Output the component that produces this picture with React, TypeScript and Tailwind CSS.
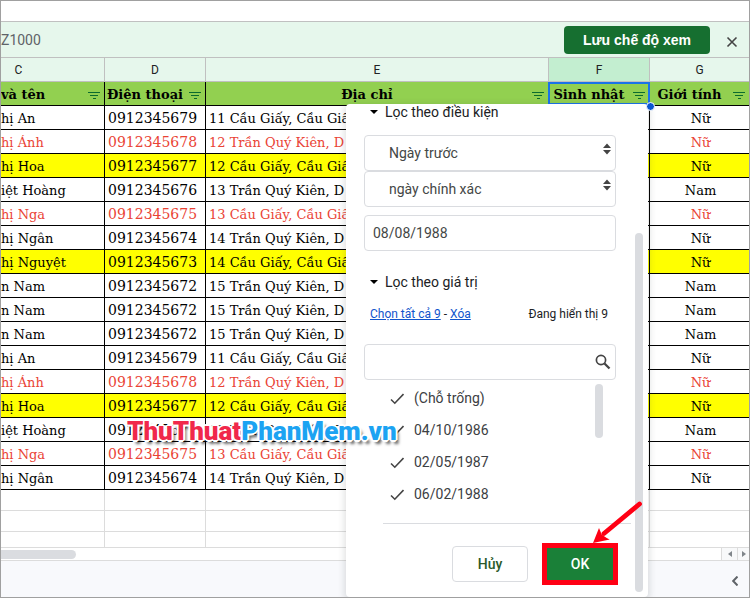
import { useState } from "react";
import clsx from "clsx";

type Tone = "plain" | "red" | "yellow";

const columns = ["C", "D", "E", "F", "G"];

const rows: { name: string; phone: string; address: string; gender: string; tone: Tone }[] = [
  { name: "hị An", phone: "0912345679", address: "11 Cầu Giấy, Cầu Giấ", gender: "Nữ", tone: "plain" },
  { name: "hị Ánh", phone: "0912345678", address: "12 Trần Quý Kiên, D", gender: "Nữ", tone: "red" },
  { name: "hị Hoa", phone: "0912345677", address: "12 Cầu Giấy, Cầu Giấ", gender: "Nữ", tone: "yellow" },
  { name: "iệt Hoàng", phone: "0912345676", address: "13 Trần Quý Kiên, D", gender: "Nam", tone: "plain" },
  { name: "hị Nga", phone: "0912345675", address: "13 Cầu Giấy, Cầu Giấ", gender: "Nữ", tone: "red" },
  { name: "hị Ngân", phone: "0912345674", address: "14 Trần Quý Kiên, D", gender: "Nữ", tone: "plain" },
  { name: "hị Nguyệt", phone: "0912345673", address: "14 Cầu Giấy, Cầu Giấ", gender: "Nữ", tone: "yellow" },
  { name: "n Nam", phone: "0912345672", address: "15 Trần Quý Kiên, D", gender: "Nam", tone: "plain" },
  { name: "n Nam", phone: "0912345672", address: "15 Trần Quý Kiên, D", gender: "Nam", tone: "plain" },
  { name: "n Nam", phone: "0912345672", address: "15 Trần Quý Kiên, D", gender: "Nam", tone: "plain" },
  { name: "hị An", phone: "0912345679", address: "11 Cầu Giấy, Cầu Giấ", gender: "Nữ", tone: "plain" },
  { name: "hị Ánh", phone: "0912345678", address: "12 Trần Quý Kiên, D", gender: "Nữ", tone: "red" },
  { name: "hị Hoa", phone: "0912345677", address: "12 Cầu Giấy, Cầu Giấ", gender: "Nữ", tone: "yellow" },
  { name: "iệt Hoàng", phone: "0912345676", address: "13 Trần Quý Kiên, D", gender: "Nam", tone: "plain" },
  { name: "hị Nga", phone: "0912345675", address: "13 Cầu Giấy, Cầu Giấ", gender: "Nữ", tone: "red" },
  { name: "hị Ngân", phone: "0912345674", address: "14 Trần Quý Kiên, D", gender: "Nữ", tone: "plain" },
];

const rowTone: Record<Tone, string> = {
  plain: "bg-white text-black",
  red: "bg-white text-[#ea4335]",
  yellow: "bg-[#ffff00] text-black",
};

const values = ["(Chỗ trống)", "04/10/1986", "02/05/1987", "06/02/1988"];

const headings = ["và tên", "Điện thoại", "Địa chỉ", "Sinh nhật", "Giới tính"];

function FilterIcon() {
  return (
    <svg className="h-3 w-3 shrink-0" viewBox="0 0 12 12" stroke="#0b6b2e" strokeWidth="1" fill="none">
      <path d="M0 3.5h12M2 6.5h8M5 9.5h3" />
    </svg>
  );
}

function HeaderCell({ text, index }: { text: string; index: number }) {
  return (
    <th className="relative h-6 border-r border-b border-black bg-[#92d050] p-0 pt-0.5 font-bold last:border-r-0">
      <div className="flex items-center gap-1 pr-1">
        <span className={clsx("flex-1 whitespace-nowrap", index === 0 ? "text-left" : "text-center")}>{text}</span>
        <button type="button" aria-label="Lọc">
          <FilterIcon />
        </button>
      </div>
      {index === 3 && <div className="pointer-events-none absolute inset-y-0 -right-px -left-px border-2 border-[#1a73e8]" />}
    </th>
  );
}

function Sheet() {
  return (
    <table className="w-full table-fixed border-separate border-spacing-0 font-['DejaVu_Serif',serif] text-[13px] leading-[21px]">
      <colgroup>
        <col className="w-[104px]" />
        <col className="w-[101px]" />
        <col />
        <col className="w-[101px]" />
        <col className="w-[99px]" />
      </colgroup>
      <thead>
        <tr className="font-['Roboto',sans-serif] text-xs text-[#202124]">
          {columns.map((c) => (
            <th
              key={c}
              className={clsx(
                "h-6 border-r border-b border-[#c0c0c0] p-0 font-normal last:border-r-0",
                c === "C" && "pr-[68px]",
                c === "F" ? "bg-[#c3eed0]" : "bg-[#e6f7ec]",
              )}
            >
              {c}
            </th>
          ))}
        </tr>
        <tr>
          {headings.map((h, i) => (
            <HeaderCell key={h} text={h} index={i} />
          ))}
        </tr>
      </thead>
      <tbody>
        {rows.map((r, i) => (
          <tr key={i} className={clsx("whitespace-nowrap *:overflow-hidden *:border-r *:border-b *:border-black", rowTone[r.tone])}>
            <td className="p-0 pt-0.5">{r.name}</td>
            <td className="p-0 pt-0.5 pl-[3px] text-sm leading-[21px]">{r.phone}</td>
            <td className="p-0 pt-0.5 pl-[3px]">{r.address}</td>
            <td className="p-0" />
            <td className="border-r-0! p-0 pt-0.5 pl-0.5 text-center">{r.gender}</td>
          </tr>
        ))}
        {["h-[21px]", "h-[21px]", "h-4"].map((h, i) => (
          <tr key={i}>
            {columns.map((c) => (
              <td key={c} className={clsx("border-r border-b border-[#dcdcdc] p-0 last:border-r-0", h)} />
            ))}
          </tr>
        ))}
      </tbody>
    </table>
  );
}

function SectionTitle({ text }: { text: string }) {
  return (
    <button type="button" className="ml-1.5 flex h-4 items-center gap-[7px] text-sm leading-4 text-[#202124]">
      <svg className="h-2 w-2" viewBox="0 0 8 8">
        <path d="M0 2h8L4 6z" fill="#000" />
      </svg>
      {text}
    </button>
  );
}

function SelectBox({ label, option }: { label: string; option: string }) {
  return (
    <div className="relative">
      <select
        aria-label={label}
        className="block h-9 w-full appearance-none rounded border border-[#dadce0] bg-white px-6 text-sm text-[#444746]"
      >
        <option>{option}</option>
      </select>
      <svg className="pointer-events-none absolute top-2 right-[5px] h-3 w-2" viewBox="0 0 8 12" fill="#444">
        <path d="M0 5l4-4.500 4 4.500zM0 7h8l-4 4.500z" />
      </svg>
    </div>
  );
}

function ValueItem({ text }: { text: string }) {
  const [checked, setChecked] = useState(true);

  return (
    <label className="flex h-8 items-center gap-2.5 pl-[26px] text-sm text-[#3c4043]">
      <span className="grid h-3.5 w-3.5 *:col-start-1 *:row-start-1">
        <input
          type="checkbox"
          checked={checked}
          onChange={(e) => setChecked(e.target.checked)}
          className="peer h-3.5 w-3.5 appearance-none"
        />
        <svg
          className="pointer-events-none hidden h-3.5 w-3.5 peer-checked:block"
          viewBox="0 0 14 14"
          fill="none"
          stroke="#444"
          strokeWidth="1.600"
        >
          <path d="M1 8.500l3.800 3.700L13.500 3" />
        </svg>
      </span>
      {text}
    </label>
  );
}

function FilterMenu() {
  return (
    <div className="absolute top-[103px] right-[101px] bottom-0 w-[302px] rounded bg-white pr-8 pl-[18px] font-['Roboto',sans-serif] shadow-[0_2px_6px_2px_rgba(60,64,67,0.15)]">
      <div className="absolute top-[129px] right-[5px] bottom-[5px] w-2 rounded-full bg-[#dadce0]" />

      <SectionTitle text="Lọc theo điều kiện" />
      <div className="mt-[15px]">
        <SelectBox label="Điều kiện" option="Ngày trước" />
        <SelectBox label="Ngày" option="ngày chính xác" />
      </div>
      <input
        type="text"
        aria-label="Giá trị"
        defaultValue="08/08/1988"
        className="mt-2 block h-9 w-full rounded border border-[#dadce0] px-2 text-sm text-[#444746]"
      />

      <div className="mt-[23px]">
        <SectionTitle text="Lọc theo giá trị" />
      </div>
      <div className="mt-4 flex h-4 items-center justify-between pr-2 pl-1.5 text-xs text-[#202124]">
        <div>
          <a href="#" className="text-[#1155cc] underline">Chọn tất cả 9</a>
          {" - "}
          <a href="#" className="text-[#1155cc] underline">Xóa</a>
        </div>
        <span>Đang hiển thị 9</span>
      </div>

      <div className="relative mt-[22px]">
        <input
          type="search"
          aria-label="Tìm kiếm"
          className="block h-9 w-full rounded border border-[#dadce0] pr-8 pl-2 text-sm"
        />
        <svg className="absolute top-2.5 right-[5px] h-4 w-4" viewBox="0 0 16 16" fill="none" stroke="#444">
          <circle cx="6" cy="6" r="4.600" strokeWidth="1.700" />
          <path d="M9.500 9.500l5 5" strokeWidth="2.300" />
        </svg>
      </div>

      <div className="relative mt-0.5">
        {values.map((v) => (
          <ValueItem key={v} text={v} />
        ))}
        <div className="absolute top-0.5 right-[13px] h-[54px] w-2 rounded-full bg-[#dadce0]" />
      </div>

      <div className="mt-[13px] -mr-[15px] ml-[19px] border-t border-[#dadce0]" />

      <div className="mt-[19px] -mr-0.5 flex items-center justify-end gap-3.5 text-sm font-medium">
        <button type="button" className="h-9 w-[76px] rounded border border-[#dadce0] text-[#2b5a2b]">
          Hủy
        </button>
        <div className="relative">
          <button type="button" className="block h-[42px] w-[76px] border-5 border-[#ff0014] bg-[#1a8038] text-white">
            OK
          </button>
          {/* pointer to the confirm button */}
          <svg className="pointer-events-none absolute right-[-26px] bottom-full h-11 w-[52px]" viewBox="0 0 52 44">
            <path d="M47.500 5L12 34.500" stroke="#ff0014" strokeWidth="4.800" strokeLinecap="round" />
            <path d="M1 44L7 29l2.700 6.500 5 3.500 3 1.500z" fill="#ff0014" />
          </svg>
        </div>
      </div>
    </div>
  );
}

export default function App() {
  return (
    <div className="relative flex min-h-screen w-full flex-col overflow-hidden border border-[#a0a0a0] bg-white">
      <div className="h-[21px] border-b border-[#c0c0c0]" />

      {/* Filter view bar */}
      <div className="flex h-9 items-center border-b border-[#c0c0c0] bg-[#e6f7ec] font-['Roboto',sans-serif]">
        <span className="flex-1 text-sm text-[#5f6368]">Z1000</span>
        <button
          type="button"
          className="h-7 w-[146px] rounded bg-[#166f30] font-['Liberation_Sans',sans-serif] text-sm font-bold text-white"
        >
          Lưu chế độ xem
        </button>
        <button type="button" aria-label="Đóng" className="mr-[11px] ml-4 pt-1">
          <svg className="h-3 w-3" viewBox="0 0 12 12" stroke="#444" strokeWidth="1.600">
            <path d="M1.500 1.500l9 9M10.500 1.500l-9 9" />
          </svg>
        </button>
      </div>

      <Sheet />

      {/* Horizontal scroll bar */}
      <div className="flex h-[13px] items-center justify-between border-b border-[#dcdcdc]">
        <div className="h-[9px] w-[75px] rounded-r-full bg-[#dadce0]" />
        <div className="flex h-full">
          <button type="button" aria-label="Trái" className="flex w-4 items-center justify-center border-l border-[#dcdcdc] bg-[#f8f9fa]">
            <svg className="h-1.5 w-1" viewBox="0 0 4 6"><path d="M4 0v6L0 3z" fill="#80868b" /></svg>
          </button>
          <button type="button" aria-label="Phải" className="flex w-3 items-center justify-center border-l border-[#dcdcdc] bg-[#f8f9fa]">
            <svg className="h-1.5 w-1" viewBox="0 0 4 6"><path d="M0 0v6l4-3z" fill="#80868b" /></svg>
          </button>
        </div>
      </div>

      <div className="flex flex-1 items-center justify-end bg-[#f8f9fc] pt-1 pr-[11px]">
        <button type="button" aria-label="Hiện bảng bên">
          <svg className="h-2.5 w-1.5" viewBox="0 0 6 10" fill="none" stroke="#5f6368" strokeWidth="2">
            <path d="M5.500 .5L1.200 5l4.300 4.500" />
          </svg>
        </button>
      </div>

      <FilterMenu />

      {/* Fill handle of the active cell */}
      <div className="absolute top-[101px] right-[94px] h-[9px] w-[9px] rounded-full border border-white bg-[#0b57d0]" />

      {/* Watermark */}
      <div className="pointer-events-none absolute top-[412px] left-[126px] font-['Roboto',sans-serif] text-[26px] leading-9 font-black whitespace-nowrap [text-shadow:1px_1px_0_#fff,-1px_-1px_0_#fff,1px_-1px_0_#fff,-1px_1px_0_#fff,2px_0_0_#fff,-2px_0_0_#fff,0_2px_0_#fff,0_-2px_0_#fff,3px_4px_3px_rgba(0,0,0,0.6)]">
        <span className="text-[#f0284b]">ThuThuat</span>
        <span className="text-[#1ca3f2]">PhanMem.vn</span>
      </div>
    </div>
  );
}
